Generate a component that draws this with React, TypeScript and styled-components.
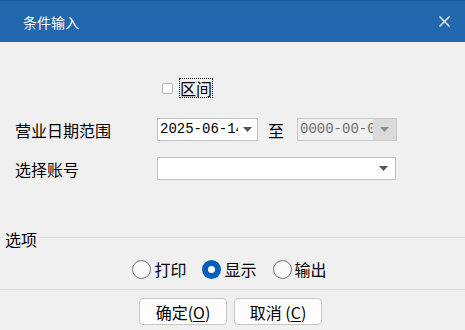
import React, { useState } from 'react';
import styled, { createGlobalStyle } from 'styled-components';

const GlobalStyle = createGlobalStyle`
  html, body {
    margin: 0;
    padding: 0;
    background: #f0f0f0;
  }
  body {
    font-family: "Noto Sans CJK SC", "Noto Sans", sans-serif;
    color: #000;
  }
`;

const Dialog = styled.div`
  width: 465px;
  height: 330px;
  background: #f0f0f0;
  display: flex;
  flex-direction: column;
  overflow: hidden;
`;

const TitleBar = styled.div`
  height: 41px;
  flex-shrink: 0;
  border-top: 1px solid #1a5a9b;
  background: #2067ae;
  color: #fff;
  font-size: 14px;
  display: flex;
  align-items: center;
  justify-content: space-between;
  padding: 0 15px 0 23px;
`;

const CloseButton = styled.div`
  width: 11px;
  height: 11px;
  display: flex;
`;

const Form = styled.div`
  display: flex;
  flex-direction: column;
  padding-left: 15px;
`;

const RangeRow = styled.div`
  margin-top: 36px;
  padding-left: 147px;
  height: 20px;
  display: flex;
  align-items: center;
  gap: 6px;
`;

const CheckBox = styled.div`
  width: 11px;
  height: 11px;
  box-sizing: border-box;
  border: 1px solid #b4b4b4;
  border-radius: 2px;
  background: #fff;
`;

const FocusLabel = styled.span`
  border: 1px dotted #000;
  font-size: 16px;
  line-height: 18px;
`;

const Row = styled.div<{ $gap: number }>`
  margin-top: ${(p) => p.$gap}px;
  height: 23px;
  display: flex;
  align-items: center;
`;

const Label = styled.span`
  width: 142px;
  font-size: 16px;
  line-height: 20px;
`;

const Combo = styled.div<{ $width: number; $disabled?: boolean }>`
  width: ${(p) => p.$width}px;
  height: 23px;
  box-sizing: border-box;
  border: 1px solid ${(p) => (p.$disabled ? '#c8c8c8' : '#c2c2c2')};
  background: ${(p) => (p.$disabled ? '#f0f0f0' : '#fff')};
  display: flex;
`;

const ComboText = styled.span<{ $disabled?: boolean }>`
  flex: 1;
  overflow: hidden;
  white-space: nowrap;
  padding-left: 2px;
  font-family: "Liberation Mono", "DejaVu Sans Mono", monospace;
  font-size: 14px;
  line-height: 21px;
  color: ${(p) => (p.$disabled ? '#6f6f6f' : '#000')};
`;

const DropButton = styled.div<{ $width: number; $disabled?: boolean }>`
  width: ${(p) => p.$width}px;
  flex-shrink: 0;
  display: flex;
  align-items: center;
  justify-content: center;
  background: ${(p) => (p.$disabled ? '#dadada' : 'transparent')};
`;

const To = styled.span`
  margin: 0 13px 0 10px;
  font-size: 16px;
  line-height: 20px;
`;

const Options = styled.fieldset`
  margin: 45px 0 0;
  padding: 10px 0;
  min-width: 0;
  border: none;
  border-top: 1px solid #dadada;
  border-bottom: 1px solid #dadada;
`;

const Legend = styled.legend`
  margin-left: 3px;
  padding: 4px 2px 0;
  font-size: 16px;
  line-height: 20px;
`;

const RadioRow = styled.div`
  height: 20px;
  display: flex;
  align-items: center;
  justify-content: center;
  gap: 16px;
  padding-right: 6px;
`;

const RadioItem = styled.label`
  display: flex;
  align-items: center;
  gap: 3px;
  font-size: 16px;
  line-height: 20px;
  cursor: default;
`;

const RadioCircle = styled.span<{ $checked: boolean }>`
  width: 19px;
  height: 19px;
  box-sizing: border-box;
  border-radius: 50%;
  border: ${(p) => (p.$checked ? 'none' : '1.5px solid #707070')};
  background: ${(p) => (p.$checked ? '#005fb8' : '#f9f9f9')};
  display: flex;
  align-items: center;
  justify-content: center;

  &::after {
    content: '';
    display: ${(p) => (p.$checked ? 'block' : 'none')};
    width: 7px;
    height: 7px;
    border-radius: 50%;
    background: #fff;
  }
`;

const ButtonRow = styled.div`
  margin-top: 8px;
  display: flex;
  justify-content: center;
  gap: 7px;
  padding-right: 4px;
`;

const Button = styled.button`
  width: 88px;
  height: 27px;
  box-sizing: border-box;
  border: 1px solid #c6c6c6;
  border-radius: 4px;
  background: #fdfdfd;
  font-family: "Noto Sans CJK SC", "Noto Sans", sans-serif;
  font-size: 16px;
  line-height: 20px;
  color: #000;
  padding: 0;

  u {
    text-underline-offset: 2px;
  }
`;

const Arrow = ({ color }: { color: string }) => (
  <svg width="9" height="5" viewBox="0 0 9 5">
    <polygon points="0,0 9,0 4.5,5" fill={color} />
  </svg>
);

const options = ['打印', '显示', '输出'];

const App = () => {
  const [mode, setMode] = useState(1);

  return (
    <Dialog>
      <GlobalStyle />
      <TitleBar>
        <span>条件输入</span>
        <CloseButton>
          <svg width="11" height="11" viewBox="0 0 11 11">
            <path d="M0.5 0.5 L10.5 10.5 M10.5 0.5 L0.5 10.5" stroke="#fff" strokeWidth="1.3" />
          </svg>
        </CloseButton>
      </TitleBar>

      <Form>
        <RangeRow>
          <CheckBox />
          <FocusLabel>区间</FocusLabel>
        </RangeRow>

        <Row $gap={20}>
          <Label>营业日期范围</Label>
          <Combo $width={101}>
            <ComboText>2025-06-14</ComboText>
            <DropButton $width={19}>
              <Arrow color="#555" />
            </DropButton>
          </Combo>
          <To>至</To>
          <Combo $width={100} $disabled>
            <ComboText $disabled>0000-00-00</ComboText>
            <DropButton $width={23} $disabled>
              <Arrow color="#8c8c8c" />
            </DropButton>
          </Combo>
        </Row>

        <Row $gap={16}>
          <Label>选择账号</Label>
          <Combo $width={239}>
            <ComboText />
            <DropButton $width={24}>
              <Arrow color="#555" />
            </DropButton>
          </Combo>
        </Row>
      </Form>

      <Options>
        <Legend>选项</Legend>
        <RadioRow>
          {options.map((o, i) => (
            <RadioItem key={o} onClick={() => setMode(i)}>
              <RadioCircle $checked={mode === i} />
              {o}
            </RadioItem>
          ))}
        </RadioRow>
      </Options>

      <ButtonRow>
        <Button>
          确定(<u>O</u>)
        </Button>
        <Button>
          取消 (<u>C</u>)
        </Button>
      </ButtonRow>
    </Dialog>
  );
};

export default App;
